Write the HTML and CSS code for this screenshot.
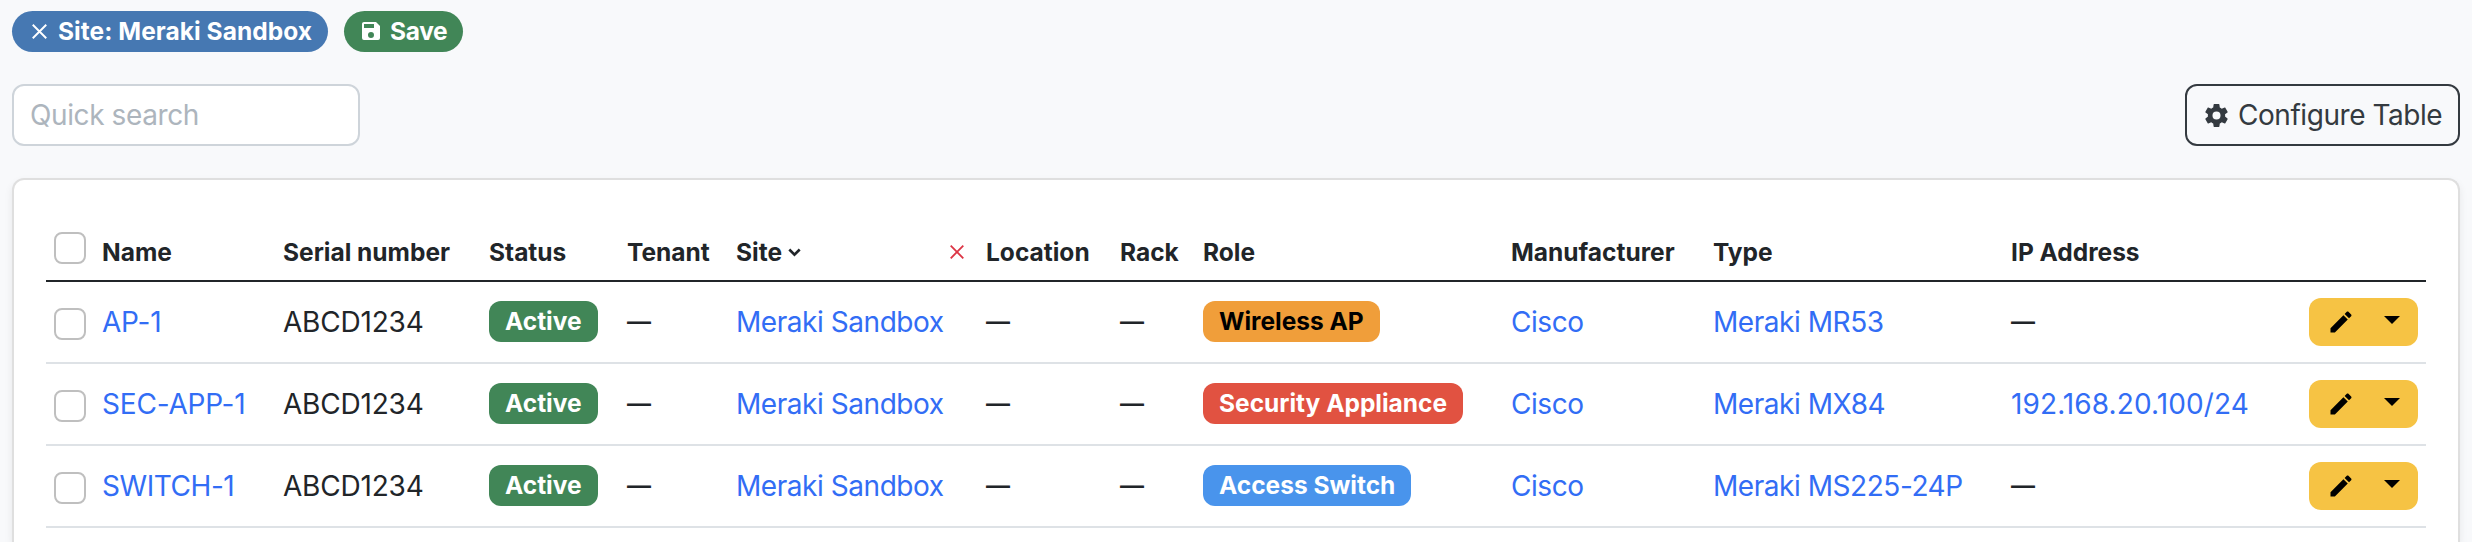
FILE: index.html
```
<!DOCTYPE html>
<html lang="en">
<head>
<meta charset="utf-8">
<title>Devices</title>
<link rel="stylesheet" href="styles.css">
</head>
<body>
<svg class="sprite" aria-hidden="true">
  <symbol id="pencil" viewBox="0 0 24 24"><path d="M20.71,7.04C21.1,6.65 21.1,6 20.71,5.63L18.37,3.29C18,2.9 17.35,2.9 16.96,3.29L15.12,5.12L18.87,8.87M3,17.25V21H6.75L17.81,9.93L14.06,6.18L3,17.25Z"/></symbol>
</svg>
<div class="filters">
  <a class="pill pill-filter"><svg class="pill-x" viewBox="0 0 14 14"><path d="M.7 .7L13.3 13.3M13.3 .7L.7 13.3"/></svg><span>Site: Meraki Sandbox</span></a>
  <a class="pill pill-save"><svg class="pill-disk" viewBox="3 3 18 18"><path d="M15,9H5V5H15M12,19A3,3 0 0,1 9,16A3,3 0 0,1 12,13A3,3 0 0,1 15,16A3,3 0 0,1 12,19M17,3H5C3.89,3 3,3.9 3,5V19A2,2 0 0,0 5,21H19A2,2 0 0,0 21,19V7L17,3Z"/></svg><span>Save</span></a>
</div>
<div class="toolbar">
  <input class="search" type="text" placeholder="Quick search">
  <button class="configure" type="button"><svg class="cog" viewBox="2 2 20 20"><path d="M12,15.5A3.5,3.5 0 0,1 8.5,12A3.5,3.5 0 0,1 12,8.5A3.5,3.5 0 0,1 15.5,12A3.5,3.5 0 0,1 12,15.5M19.43,12.97C19.47,12.65 19.5,12.33 19.5,12C19.5,11.67 19.47,11.34 19.43,11L21.54,9.37C21.73,9.22 21.78,8.95 21.66,8.73L19.66,5.27C19.54,5.05 19.27,4.96 19.05,5.05L16.56,6.05C16.04,5.66 15.5,5.32 14.87,5.07L14.5,2.42C14.46,2.18 14.25,2 14,2H10C9.75,2 9.54,2.18 9.5,2.42L9.13,5.07C8.5,5.32 7.96,5.66 7.44,6.05L4.95,5.05C4.73,4.96 4.46,5.05 4.34,5.27L2.34,8.73C2.21,8.95 2.27,9.22 2.46,9.37L4.57,11C4.53,11.34 4.5,11.67 4.5,12C4.5,12.33 4.53,12.65 4.57,12.97L2.46,14.63C2.27,14.78 2.21,15.05 2.34,15.27L4.34,18.73C4.46,18.95 4.73,19.03 4.95,18.95L7.44,17.94C7.96,18.34 8.5,18.68 9.13,18.93L9.5,21.58C9.54,21.82 9.75,22 10,22H14C14.25,22 14.46,21.82 14.5,21.58L14.87,18.93C15.5,18.67 16.04,18.34 16.56,17.94L19.05,18.95C19.27,19.03 19.54,18.95 19.66,18.73L21.66,15.27C21.78,15.05 21.73,14.78 21.54,14.63L19.43,12.97Z"/></svg><span>Configure Table</span></button>
</div>
<div class="card">
<table class="devices">
  <colgroup><col class="c-check"><col class="c-name"><col class="c-serial"><col class="c-status"><col class="c-tenant"><col class="c-site"><col class="c-location"><col class="c-rack"><col class="c-role"><col class="c-maker"><col class="c-type"><col class="c-ip"><col class="c-actions"></colgroup>
  <thead>
    <tr>
      <th><input class="check check-all" type="checkbox"></th>
      <th>Name</th><th>Serial number</th><th>Status</th><th>Tenant</th>
      <th><div class="sorted"><span>Site</span><svg class="chev" viewBox="0 0 12 8"><path d="M1.2 1.2L6 6L10.8 1.2"/></svg><svg class="clear" viewBox="0 0 14 14"><path d="M.7 .7L13.3 13.3M13.3 .7L.7 13.3"/></svg></div></th>
      <th>Location</th><th>Rack</th><th>Role</th><th>Manufacturer</th><th>Type</th><th>IP Address</th><th></th>
    </tr>
  </thead>
  <tbody>
    <tr>
      <td><input class="check" type="checkbox"></td>
      <td><a class="link code">AP-1</a></td><td class="code">ABCD1234</td><td><span class="badge green">Active</span></td><td class="dash">—</td><td><a class="link">Meraki Sandbox</a></td><td class="dash">—</td><td class="dash">—</td><td><span class="badge orange">Wireless AP</span></td><td><a class="link">Cisco</a></td><td><a class="link">Meraki MR53</a></td><td class="dash">—</td>
      <td><div class="actions"><svg class="pen"><use href="#pencil"/></svg><span class="caret"></span></div></td>
    </tr>
    <tr>
      <td><input class="check" type="checkbox"></td>
      <td><a class="link code">SEC-APP-1</a></td><td class="code">ABCD1234</td><td><span class="badge green">Active</span></td><td class="dash">—</td><td><a class="link">Meraki Sandbox</a></td><td class="dash">—</td><td class="dash">—</td><td><span class="badge red">Security Appliance</span></td><td><a class="link">Cisco</a></td><td><a class="link">Meraki MX84</a></td><td><a class="link ip">192.168.20.100/24</a></td>
      <td><div class="actions"><svg class="pen"><use href="#pencil"/></svg><span class="caret"></span></div></td>
    </tr>
    <tr>
      <td><input class="check" type="checkbox"></td>
      <td><a class="link">SWITCH-1</a></td><td class="code">ABCD1234</td><td><span class="badge green">Active</span></td><td class="dash">—</td><td><a class="link">Meraki Sandbox</a></td><td class="dash">—</td><td class="dash">—</td><td><span class="badge blue">Access Switch</span></td><td><a class="link">Cisco</a></td><td><a class="link">Meraki MS225-24P</a></td><td class="dash">—</td>
      <td><div class="actions"><svg class="pen"><use href="#pencil"/></svg><span class="caret"></span></div></td>
    </tr>
  </tbody>
</table>
</div>
</body>
</html>
```

FILE: styles.css
```
* { box-sizing: border-box; }
html, body { height: 100%; overflow: hidden; }
body {
  display: flex;
  flex-direction: column;
  margin: 0;
  padding: 11px 12px 0;
  background: #f8f9fb;
  color: #212529;
  font: 28px/42px Inter, "Liberation Sans", sans-serif;
  letter-spacing: -.45px;
}
.sprite { display: none; }
.filters { display: flex; gap: 16px; height: 41px; }
.pill {
  display: flex;
  align-items: center;
  height: 41px;
  padding-bottom: 1px;
  border-radius: 21px;
  color: #fff;
  font-size: 24.5px;
  line-height: 40px;
  font-weight: 700;
  letter-spacing: .05px;
  white-space: nowrap;
}
.pill-filter { width: 316px; padding-left: 20px; background: #4678b2; }
.pill-save { width: 119px; padding-left: 18px; background: #418657; letter-spacing: -.35px; }
.pill-x { width: 15px; height: 15px; margin-right: 11px; fill: none; stroke: #fff; stroke-width: 1.8; }
.pill-disk { width: 18px; height: 18px; margin-right: 10px; fill: #fff; }
.toolbar { display: flex; justify-content: space-between; margin: 32px 0; height: 62px; }
.search {
  width: 348px;
  height: 62px;
  padding: 0 16px;
  border: 2px solid #ced4da;
  border-radius: 12px;
  background: #fff;
  font: inherit;
  letter-spacing: -.4px;
}
.search::placeholder { color: #adb5bd; opacity: 1; }
.configure {
  display: flex;
  align-items: center;
  width: 275px;
  height: 62px;
  padding: 0 0 0 18px;
  border: 2px solid #343a40;
  border-radius: 12px;
  background: transparent;
  color: #343a40;
  font: inherit;
  letter-spacing: -.45px;
  white-space: nowrap;
}
.cog { width: 23px; height: 23px; margin-right: 10px; fill: #343a40; }
.card {
  flex: 1;
  padding: 32px 32px 0;
  border: 2px solid #dfdfdf;
  border-bottom: 0;
  border-radius: 12px 12px 0 0;
  background: #fff;
  box-shadow: 0 4px 8px rgba(0, 0, 0, .075);
}
.devices { width: 2380px; table-layout: fixed; border-collapse: separate; border-spacing: 0; }
.c-check { width: 56px; }
.c-name { width: 181px; }
.c-serial { width: 206px; }
.c-status { width: 138px; }
.c-tenant { width: 109px; }
.c-site { width: 250px; }
.c-location { width: 134px; }
.c-rack { width: 83px; }
.c-role { width: 308px; }
.c-maker { width: 202px; }
.c-type { width: 298px; }
.c-ip { width: 298px; }
.c-actions { width: 117px; }
th, td { padding: 0; text-align: left; white-space: nowrap; }
th { height: 70px; padding-top: 12px; border-bottom: 2px solid #212529; font-size: 24.5px; line-height: 36px; font-weight: 700; letter-spacing: 0; }
td { height: 82px; border-bottom: 2px solid #dee2e6; vertical-align: middle; }
.check {
  appearance: none;
  display: block;
  width: 32px;
  height: 32px;
  margin: 4px 0 0 8px;
  border: 2px solid #bfbfbf;
  border-radius: 8px;
  background: #fff;
}
.check-all { margin-top: -8px; }
.sorted { display: flex; align-items: center; }
.chev { width: 13px; height: 9px; margin-left: 6px; fill: none; stroke: #212529; stroke-width: 2.4; }
.clear { width: 14px; height: 14px; margin: 0 22px 0 auto; fill: none; stroke: #dc3545; stroke-width: 1.8; }
.link { color: #326df5; }
.code { letter-spacing: -.2px; }
.ip { letter-spacing: .1px; }
.dash { font-size: 24px; font-weight: 600; letter-spacing: 0; }
.badge {
  display: flex;
  align-items: center;
  width: fit-content;
  height: 41px;
  margin-top: -1px;
  padding: 0 16px 1px;
  border-radius: 12px;
  color: #fff;
  font-size: 24.5px;
  line-height: 40px;
  font-weight: 700;
  letter-spacing: 0;
}
.green { background: #418657; }
.orange { background: #f09e3a; color: #000; }
.red { background: #e15241; }
.blue { background: #4994ec; }
.actions {
  display: flex;
  align-items: center;
  width: 109px;
  height: 48px;
  padding-left: 18px;
  border-radius: 12px;
  background: #f6c344;
}
.pen { width: 28px; height: 28px; }
.caret { margin: -4px 0 0 29px; border: 8px solid transparent; border-top-color: #000; border-bottom: 0; }
```
